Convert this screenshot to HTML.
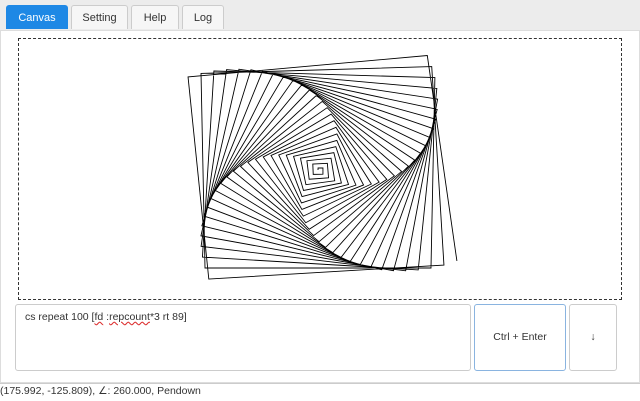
<!DOCTYPE html>
<html><head><style>
body{margin:0;width:640px;height:400px;overflow:hidden;background:#fff;font-family:"Liberation Sans",sans-serif;position:relative}
.top{position:absolute;left:0;top:0;width:640px;height:30px;background:#ececec;border-bottom:1px solid #ddd}
.tab{position:absolute;top:5px;height:24px;line-height:24px;font-size:11px;text-align:center;border:1px solid #ccc;border-bottom:none;border-radius:3px 3px 0 0;background:#f6f6f6;color:#333;box-sizing:border-box}
.main{position:absolute;left:0;top:30px;width:638px;height:352px;border:1px solid #ddd;border-top:none}
.cv{position:absolute;left:18px;top:38px;width:604px;height:262px;border:1px dashed #333;box-sizing:border-box}
.ta{position:absolute;left:15px;top:304px;width:456px;height:67px;border:1px solid #ccc;border-radius:3px;box-sizing:border-box;font-size:10.5px;color:#333;padding:6px 0 0 9px}
.btn{position:absolute;top:304px;height:67px;border:1px solid #ccc;border-radius:3px;box-sizing:border-box;font-size:10.5px;color:#333;text-align:center;line-height:65px}
.st{position:absolute;left:0;top:383px;width:640px;height:17px;border-top:1px solid #ccc;font-size:10.5px;color:#333;line-height:15px;background:#fff}
</style></head><body>
<div class="top"></div>
<div class="main"></div>
<div class="tab" style="left:6px;width:62px;background:#1e88e5;border-color:#1e88e5;color:#fff">Canvas</div>
<div class="tab" style="left:71px;width:57px">Setting</div>
<div class="tab" style="left:131px;width:48px">Help</div>
<div class="tab" style="left:182px;width:42px">Log</div>
<div class="cv"></div>
<svg style="position:absolute;left:0;top:0" width="640" height="400"><path id="sp" fill="none" stroke="#000" stroke-width="0.9"/></svg>
<div class="ta">cs repeat 100 [<span style="text-decoration:underline wavy #d33">fd</span> :<span style="text-decoration:underline wavy #d33">repcount</span>*3 rt 89]</div>
<div class="btn" style="left:474px;width:92px;border-color:#8ab4e0">Ctrl + Enter</div>
<div class="btn" style="left:569px;width:48px">↓</div>
<div class="st">(175.992, -125.809), ∠: 260.000, Pendown</div>
<script>
var x=0,y=0,h=0,sx=0.81,sy=0.69,cx=318,cy=170,a=2*Math.PI/180,d="M"+cx+" "+cy;
for(var i=1;i<=100;i++){var r=h*Math.PI/180;x+=i*3*Math.sin(r);y+=i*3*Math.cos(r);h+=89;
var rx=x*Math.cos(a)+y*Math.sin(a),ry=-x*Math.sin(a)+y*Math.cos(a);
d+=" L"+(cx+rx*sx).toFixed(2)+" "+(cy-ry*sy).toFixed(2);}
document.getElementById("sp").setAttribute("d",d);
</script>
</body></html>
